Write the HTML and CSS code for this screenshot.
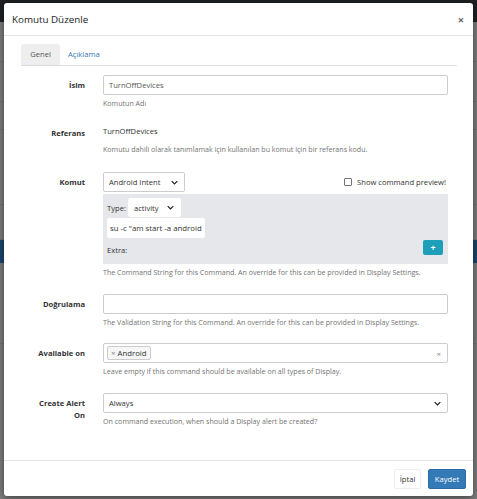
FILE: index.html
```html
<!DOCTYPE html>
<html lang="tr">
<head>
<meta charset="utf-8">
<title>Komutu Düzenle</title>
<link rel="stylesheet" href="styles.css">
</head>
<body>
<div class="page">
  <div class="navbar"></div>
  <div class="bg-sec h40"></div>
  <div class="bg-sec h40"></div>
  <div class="bg-sec h28"></div>
  <div class="bg-sec h75"></div>
  <div class="bg-sec h35"></div>
  <div class="bg-blue"></div>
  <div class="bg-sec h80"></div>
</div>

<div class="modal">
  <div class="modal-header">
    <h4 class="modal-title">Komutu Düzenle</h4>
    <span class="close">&times;</span>
  </div>
  <div class="modal-body">
    <ul class="tabs">
      <li class="tab active">Genel</li>
      <li class="tab"><span class="tab-link">Açıklama</span></li>
    </ul>

    <div class="form">
      <div class="row r-isim">
        <div class="label">İsim</div>
        <div class="field">
          <div class="input">TurnOffDevices</div>
          <div class="help">Komutun Adı</div>
        </div>
      </div>

      <div class="row r-ref">
        <div class="label label-static">Referans</div>
        <div class="field">
          <div class="static">TurnOffDevices</div>
          <div class="help">Komutu dahili olarak tanımlamak için kullanılan bu komut için bir referans kodu.</div>
        </div>
      </div>

      <div class="row r-komut">
        <div class="label">Komut</div>
        <div class="field">
          <div class="komut-top">
            <div class="select komut-select"><span>Android Intent</span><svg class="chev" viewBox="0 0 10 6" width="7" height="5"><path d="M1 1l4 4 4-4" fill="none" stroke="#222" stroke-width="1.8"/></svg></div>
            <label class="check"><span class="checkbox"></span><span>Show command preview!</span></label>
          </div>
          <div class="intent-box">
            <div class="type-row">
              <span class="type-label">Type:</span>
              <div class="select type-select"><span>activity</span><svg class="chev" viewBox="0 0 10 6" width="7" height="5"><path d="M1 1l4 4 4-4" fill="none" stroke="#222" stroke-width="1.8"/></svg></div>
            </div>
            <div class="input intent-input">su -c "am start -a android</div>
            <div class="extra-row">
              <span class="extra-label">Extra:</span>
              <span class="plus-btn">+</span>
            </div>
          </div>
          <div class="help">The Command String for this Command. An override for this can be provided in Display Settings.</div>
        </div>
      </div>

      <div class="row r-dog">
        <div class="label">Doğrulama</div>
        <div class="field">
          <div class="input"></div>
          <div class="help">The Validation String for this Command. An override for this can be provided in Display Settings.</div>
        </div>
      </div>

      <div class="row r-avail">
        <div class="label">Available on</div>
        <div class="field">
          <div class="input multi">
            <span class="tag"><span class="tag-x">×</span>Android</span>
            <span class="clear-x">×</span>
          </div>
          <div class="help">Leave empty if this command should be available on all types of Display.</div>
        </div>
      </div>

      <div class="row r-alert">
        <div class="label">Create Alert<br>On</div>
        <div class="field">
          <div class="select alert-select"><span>Always</span><svg class="chev" viewBox="0 0 10 6" width="7" height="5"><path d="M1 1l4 4 4-4" fill="none" stroke="#222" stroke-width="1.8"/></svg></div>
          <div class="help">On command execution, when should a Display alert be created?</div>
        </div>
      </div>
    </div>
  </div>
  <div class="modal-footer">
    <span class="btn btn-default">İptal</span>
    <span class="btn btn-primary">Kaydet</span>
  </div>
</div>
</body>
</html>
```

FILE: styles.css
```css
html, body {
  margin: 0;
  padding: 0;
}
body {
  width: 477px;
  height: 499px;
  overflow: hidden;
  position: relative;
  background: #7e7e7e;
  font-family: "Open Sans", "Noto Sans", sans-serif;
  color: #333;
}

/* dimmed page behind modal */
.page {
  display: flex;
  flex-direction: column;
}
.navbar {
  height: 22px;
  background: #1e2124;
}
.bg-sec {
  border-bottom: 1px solid #737373;
}
.h40 { height: 39px; }
.h28 { height: 27px; }
.h75 { height: 74px; }
.h35 { height: 34px; }
.h80 { height: 80px; }
.bg-blue {
  height: 23px;
  background: #1b4670;
}

/* modal */
.modal {
  position: absolute;
  left: 4px;
  top: 3px;
  width: 469px;
  height: 493px;
  background: #fff;
  border-radius: 3px;
  box-shadow: 0 2px 8px rgba(0, 0, 0, 0.5);
  display: flex;
  flex-direction: column;
}
.modal-header {
  height: 32px;
  border-bottom: 1px solid #e5e5e5;
  display: flex;
  align-items: center;
  justify-content: space-between;
  padding: 0 9px 0 8px;
}
.modal-title {
  margin: 0;
  font-size: 9.8px;
  font-weight: 400;
  color: #222;
}
.close {
  font-size: 11px;
  font-weight: 700;
  color: #666;
  line-height: 1;
}
.modal-body {
  flex: 1;
  padding: 8px 16px 0 17px;
}
.tabs {
  list-style: none;
  margin: 0;
  padding: 0;
  display: flex;
  height: 21px;
  border-bottom: 1px solid #ddd;
}
.tab {
  font-size: 7.6px;
  padding: 0 8px;
  line-height: 21px;
  border-radius: 3px 3px 0 0;
}
.tab.active {
  background: #eee;
  color: #555;
  width: 23px;
  padding: 0 8px;
  text-align: center;
}
.tab-link {
  color: #337ab7;
}

/* form */
.form {
  display: flex;
  flex-direction: column;
}
.row {
  display: grid;
  grid-template-columns: 64px 345px;
  column-gap: 18px;
}
.label {
  text-align: right;
  font-weight: 700;
  font-size: 7.6px;
  line-height: 12px;
  padding-top: 4px;
  color: #333;
}
.label-static {
  padding-top: 6px;
}
.field {
  display: flex;
  flex-direction: column;
}
.input, .select {
  height: 20px;
  box-sizing: border-box;
  border: 1px solid #ccc;
  border-radius: 2px;
  background: #fff;
  font-size: 7.6px;
  color: #555;
  display: flex;
  align-items: center;
  padding: 0 5px;
  white-space: nowrap;
  overflow: hidden;
}
.select {
  justify-content: space-between;
  color: #333;
  padding: 0 6px 0 5px;
}
.chev {
  flex: none;
}
.static {
  height: 20px;
  line-height: 20px;
  font-size: 7.6px;
  color: #333;
}
.help {
  font-size: 7.1px;
  line-height: 10px;
  margin-top: 3px;
  color: #737373;
  white-space: nowrap;
}

.r-isim { margin-top: 9px; }
.r-ref { margin-top: 13px; }
.r-komut { margin-top: 18px; }
.r-dog { margin-top: 17px; }
.r-avail { margin-top: 16px; }
.r-alert { margin-top: 17px; }

.komut-top {
  display: flex;
  justify-content: space-between;
  align-items: center;
}
.komut-select {
  width: 82px;
}
.check {
  display: flex;
  align-items: center;
  gap: 5px;
  font-size: 7.6px;
  color: #333;
  margin-right: 2px;
}
.checkbox {
  width: 6px;
  height: 6px;
  border: 1px solid #767676;
  border-radius: 1px;
  background: #fff;
}
.intent-box {
  margin-top: 2px;
  background: #e5e7ea;
  padding: 4px;
  height: 70px;
  box-sizing: border-box;
  display: flex;
  flex-direction: column;
}
.type-row {
  display: flex;
  align-items: center;
  gap: 2px;
  font-size: 7.6px;
}
.type-select {
  width: 53px;
  height: 19px;
  border-color: #fff;
}
.intent-input {
  width: 98px;
  margin-top: 1px;
  border-color: #fff;
  padding: 0 2px;
  color: #333;
  font-size: 7.8px;
}
.extra-row {
  display: flex;
  justify-content: space-between;
  align-items: flex-start;
  margin-top: 2px;
}
.extra-label {
  font-size: 7.6px;
  line-height: 20px;
  color: #333;
}
.plus-btn {
  width: 20px;
  height: 15px;
  background: #1d9fb9;
  border-radius: 2px;
  color: #fff;
  font-weight: 700;
  font-size: 9px;
  line-height: 15px;
  text-align: center;
  margin-right: 1px;
}

.multi {
  justify-content: space-between;
  padding: 0 6px 0 3px;
}
.tag {
  display: inline-flex;
  align-items: center;
  height: 12px;
  border: 1px solid #ccc;
  border-radius: 2px;
  background: #f6f6f6;
  padding: 0 3px;
  color: #333;
  font-size: 7.8px;
}
.tag-x {
  color: #888;
  margin-right: 2px;
}
.clear-x {
  color: #888;
  font-size: 8px;
}
.alert-select {
  width: 345px;
}

.modal-footer {
  height: 36px;
  border-top: 1px solid #e5e5e5;
  display: flex;
  justify-content: flex-end;
  align-items: flex-start;
  gap: 7px;
  padding: 8px 7px 0 0;
  box-sizing: border-box;
}
.btn {
  height: 20px;
  box-sizing: border-box;
  display: flex;
  align-items: center;
  justify-content: center;
  font-size: 7.6px;
  border-radius: 2px;
  border: 1px solid transparent;
}
.btn-default {
  width: 27px;
  color: #333;
  border-color: #eee;
}
.btn-primary {
  width: 38px;
  background: #337ab7;
  border-color: #2e6da4;
  color: #fff;
}
```
